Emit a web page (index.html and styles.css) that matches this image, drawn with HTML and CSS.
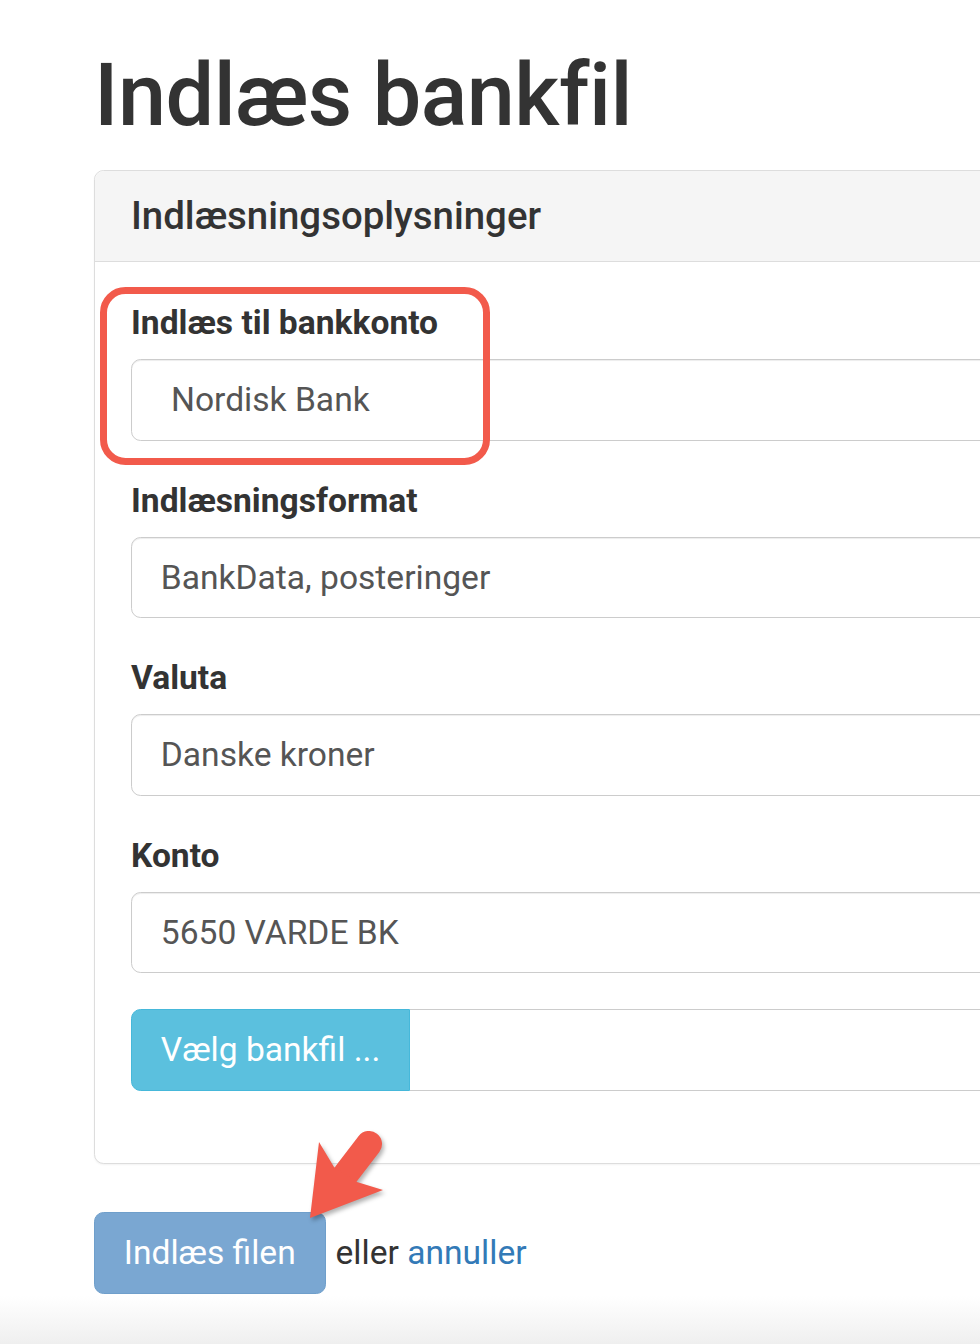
FILE: index.html
```html
<!DOCTYPE html>
<html lang="da">
<head>
<meta charset="utf-8">
<title>Indlæs bankfil</title>
<link rel="stylesheet" href="styles.css">
</head>
<body>
<div class="page">
  <div class="container">
    <h1 class="title">Indlæs bankfil</h1>
    <div class="panel">
      <div class="panel-heading"><h3 class="panel-title">Indlæsningsoplysninger</h3></div>
      <div class="panel-body">
        <div class="form-group">
          <label class="label">Indlæs til bankkonto</label>
          <div class="input input-select">Nordisk Bank</div>
        </div>
        <div class="form-group">
          <label class="label">Indlæsningsformat</label>
          <div class="input">BankData, posteringer</div>
        </div>
        <div class="form-group">
          <label class="label">Valuta</label>
          <div class="input">Danske kroner</div>
        </div>
        <div class="form-group">
          <label class="label">Konto</label>
          <div class="input">5650 VARDE BK</div>
        </div>
        <div class="form-group file-group">
          <span class="btn-file">Vælg bankfil ...</span>
          <span class="file-input"></span>
        </div>
      </div>
    </div>
    <div class="actions">
      <span class="btn-primary">Indlæs filen</span>
      <span class="or">eller <a class="link" href="#">annuller</a></span>
    </div>
  </div>
  <svg class="annotations" width="980" height="1344" viewBox="0 0 980 1344" aria-hidden="true">
    <rect x="103.5" y="290.5" width="383" height="171" rx="22" ry="22" fill="none" stroke="#f25a4b" stroke-width="7"/>
    <g class="arrow">
      <line x1="346" y1="1174" x2="369" y2="1144" stroke="#f25a4b" stroke-width="26" stroke-linecap="round"/>
      <polygon points="310,1218 319,1142 334,1167 357,1182 383,1190" fill="#f25a4b"/>
    </g>
  </svg>
</div>
</body>
</html>
```
FILE: styles.css
```css
html {
  background: linear-gradient(to bottom, #ffffff 0, #ffffff 1296px, #efefef 1344px);
  min-height: 1344px;
}
body {
  margin: 0;
  font-family: Roboto, "Helvetica Neue", Arial, sans-serif;
  font-size: 33.6px;
  line-height: 48px;
  color: #333333;
}
.page {
  position: relative;
  width: 980px;
  height: 1344px;
  overflow: hidden;
}
.container {
  padding: 48px 0 0 94px;
}
.title {
  margin: 0 0 27px 0;
  font-size: 86.4px;
  line-height: 95px;
  font-weight: 500;
  color: #333333;
  letter-spacing: -0.5px;
}
.panel {
  width: 1200px;
  border: 1px solid #dddddd;
  border-radius: 9.6px;
  background: #ffffff;
  box-shadow: 0 1px 2px rgba(0, 0, 0, 0.05);
  margin-bottom: 48px;
}
.panel-heading {
  background: #f5f5f5;
  border-bottom: 1px solid #dddddd;
  border-radius: 9px 9px 0 0;
  padding: 24px 36px;
}
.panel-title {
  margin: 0;
  font-size: 38.4px;
  line-height: 42px;
  font-weight: 500;
  color: #333333;
}
.panel-body {
  padding: 37px 36px 36px 36px;
  display: flow-root;
}
.form-group {
  margin-bottom: 36px;
}
.label {
  display: block;
  font-weight: 700;
  margin-bottom: 12px;
  color: #333333;
}
.input {
  box-sizing: border-box;
  height: 81.6px;
  border: 1px solid #cccccc;
  border-radius: 9.6px;
  padding: 16px 28.8px 14px 28.8px;
  color: #555555;
  box-shadow: inset 0 1px 1px rgba(0, 0, 0, 0.075);
  background: #ffffff;
}
.input-select {
  padding-left: 39px;
}
.file-group {
  display: flex;
  height: 81.6px;
}
.btn-file {
  box-sizing: border-box;
  width: 279px;
  display: flex;
  align-items: center;
  padding: 0 28.8px;
  background: #5bc0de;
  border: 1px solid #46b8da;
  border-radius: 9.6px 0 0 9.6px;
  color: #ffffff;
  white-space: nowrap;
}
.file-input {
  flex: 1;
  border: 1px solid #cccccc;
  border-left: none;
  background: #ffffff;
}
.actions {
  display: flex;
  align-items: center;
  gap: 10px;
}
.btn-primary {
  box-sizing: border-box;
  height: 81.6px;
  display: inline-flex;
  align-items: center;
  padding: 0 28.8px;
  background: #7aa7d2;
  border: 1px solid #6f9fcb;
  border-radius: 9.6px;
  color: #ffffff;
}
.or {
  color: #333333;
}
.link {
  color: #337ab7;
  text-decoration: none;
}
.annotations {
  position: absolute;
  left: 0;
  top: 0;
  pointer-events: none;
}
.arrow {
  filter: drop-shadow(2px 3px 2px rgba(0, 0, 0, 0.3));
}
```
